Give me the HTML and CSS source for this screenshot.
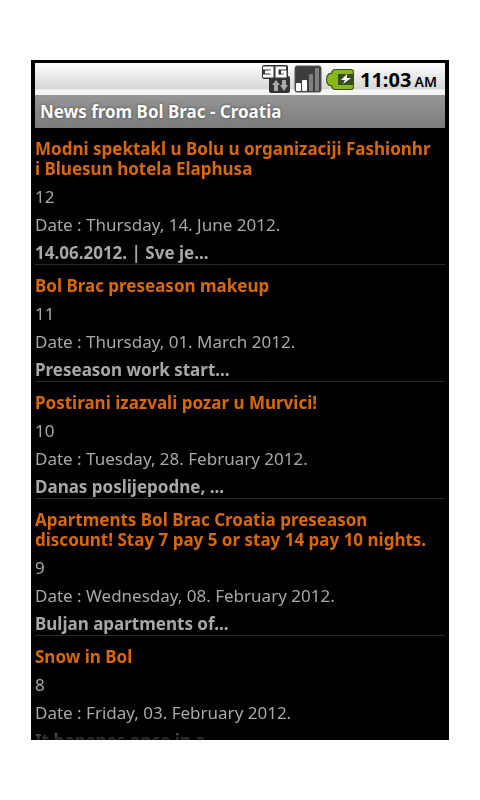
FILE: index.html
```
<!DOCTYPE html>
<html lang="en">
<head>
    <meta charset="UTF-8">
    <meta name="viewport" content="width=device-width, initial-scale=1.0">
    <title>News from Bol Brac - Croatia</title>
    <link rel="stylesheet" href="styles.css">
</head>
<body>

<div class="phone">
    <div class="status-bar">
        <svg width="28" height="28" viewBox="0 0 28 28" aria-label="3G">
            <path d="M2 0h22q2 0 2 2v9q2 0 2 2v13q0 2-2 2H9q-2 0-2-2V14H2q-2 0-2-2V2q0-2 2-2z" fill="#333"/>
            <path d="M1 3h9v8H1M3 7h7M24 3h-9v8h8V7h-4" fill="none" stroke="#fff" stroke-width="3"/>
            <path d="M14 15l4 5h-2v6h-4v-6h-2z" fill="#aaa"/>
            <path d="M20 15h4v5h2l-4 6-4-6h2z" fill="#aaa"/>
        </svg>
        <svg width="28" height="28" viewBox="0 0 28 28" aria-label="Signal">
            <rect x="1" y="1" width="26" height="26" rx="2" fill="#3d3d3d" stroke="#555"/>
            <rect x="2" y="18" width="5" height="8" rx="1" fill="#fff"/>
            <rect x="8" y="15" width="5" height="11" rx="1" fill="#fff"/>
            <rect x="15" y="9" width="4" height="17" rx="1" fill="#808080"/>
            <rect x="21" y="3" width="4" height="23" rx="1" fill="#808080"/>
        </svg>
        <svg width="28" height="28" viewBox="0 0 28 28" aria-label="Battery charging">
            <path d="M9 4h16q3 0 3 3v15q0 3-3 3H9q-3 0-4-4H3q-3-2-3-6.500T3 8h2q1-4 4-4z" fill="#35520b"/>
            <path d="M9 5h16q2 0 2 2v2H13q-1 0-1 1v9q0 1 1 1h14v2q0 2-2 2H9q-2 0-3-4H4q-3-2-3-5.500T4 9h2q1-4 3-4z" fill="#86b81c"/>
            <path d="M13 9h14v11H13q-1 0-1-1v-9q0-1 1-1z" fill="#3a4a24"/>
            <path d="M21 9l-6 6h4l-2 4 8-6h-4z" fill="#fff"/>
        </svg>
        <span class="clock">11:03 <small>AM</small></span>
    </div>
    <h1 class="title-bar">News from Bol Brac - Croatia</h1>
    <ul class="news">
        <li>
            <h2>Modni spektakl u Bolu u organizaciji Fashionhr i Bluesun hotela Elaphusa</h2>
            <p>12</p>
            <p>Date : Thursday, 14. June 2012.</p>
            <p class="summary">14.06.2012. | Sve je...</p>
        </li>
        <li>
            <h2>Bol Brac preseason makeup</h2>
            <p>11</p>
            <p>Date : Thursday, 01. March 2012.</p>
            <p class="summary">Preseason work start...</p>
        </li>
        <li>
            <h2>Postirani izazvali pozar u Murvici!</h2>
            <p>10</p>
            <p>Date : Tuesday, 28. February 2012.</p>
            <p class="summary">Danas poslijepodne, ...</p>
        </li>
        <li>
            <h2>Apartments Bol Brac Croatia preseason discount! Stay 7 pay 5 or stay 14 pay 10 nights.</h2>
            <p>9</p>
            <p>Date : Wednesday, 08. February 2012.</p>
            <p class="summary">Buljan apartments of...</p>
        </li>
        <li>
            <h2>Snow in Bol</h2>
            <p>8</p>
            <p>Date : Friday, 03. February 2012.</p>
            <p class="summary">It hapenes once in a...</p>
        </li>
    </ul>
</div>

</body>
</html>
```

FILE: styles.css
```
* {
    box-sizing: border-box;
}
body {
    font-family: "Noto Sans", "Open Sans", sans-serif;
    background: #fff;
    margin: 0;
    padding: 60px 31px;
    height: 100vh;
}
.phone {
    display: flex;
    flex-direction: column;
    height: 100%;
    padding: 3px 4px 0;
    background: #000;
    overflow: hidden;
}
.status-bar {
    display: flex;
    flex-shrink: 0;
    justify-content: flex-end;
    align-items: center;
    gap: 4px;
    height: 32px;
    padding-right: 8px;
    background: linear-gradient(#fff, #d6d6d6 80%, #f4f4f4 84%, #f4f4f4);
}
.clock {
    margin-left: 2px;
    font-size: 20px;
    font-weight: bold;
    color: #000;
}
.clock small {
    margin-left: -2px;
    font-size: 14px;
    font-weight: 600;
}
.title-bar {
    flex-shrink: 0;
    margin: 0;
    padding: 0 5px;
    background: linear-gradient(#969696, #7c7c7c);
    color: #fff;
    font-size: 17px;
    line-height: 33px;
    text-shadow: 0 0 3px #444;
}
.news {
    flex: 1;
    min-height: 0;
    margin: 0;
    padding: 0;
    list-style: none;
    overflow: hidden;
    /* list fades out at the bottom edge */
    mask-image: linear-gradient(#000 calc(100% - 20px), rgba(0, 0, 0, 0.2));
}
.news li {
    display: flex;
    flex-direction: column;
    gap: 8px;
    padding: 11px 0 1px;
    border-bottom: 1px solid #2b2b2b;
    color: #a8a8a8;
    font-size: 17px;
    line-height: 20px;
}
.news h2 {
    margin: 0;
    padding-right: 8px;
    color: #d8690a;
    font-size: 17px;
}
.news p {
    margin: 0;
}
.news .summary {
    font-weight: bold;
}
```
